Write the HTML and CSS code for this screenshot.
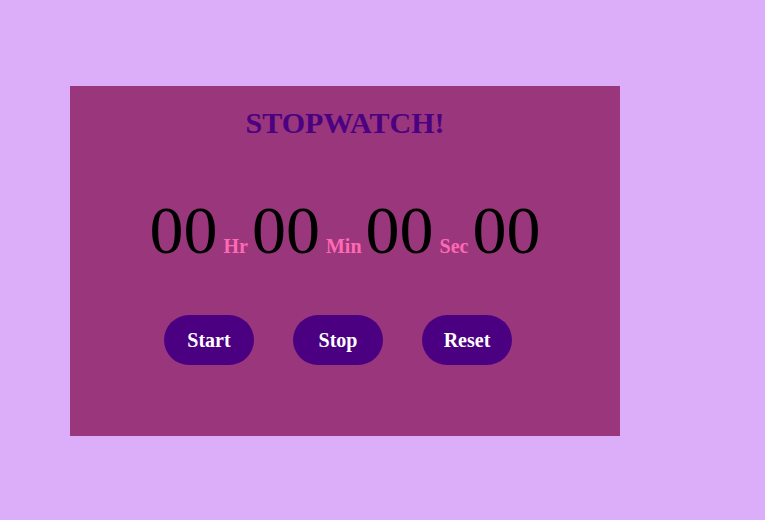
FILE: index.html
```html
<!DOCTYPE html>
<html>
<head>
<meta charset="utf-8">
<link rel="stylesheet" href="styles.css">
</head>
<body>
<div class="panel">
  <h1 class="title">STOPWATCH!</h1>
  <div class="time">
    <span class="num">00</span><span class="unit">Hr</span>
    <span class="num">00</span><span class="unit">Min</span>
    <span class="num">00</span><span class="unit">Sec</span>
    <span class="num">00</span>
  </div>
  <div class="buttons">
    <button class="btn">Start</button>
    <button class="btn">Stop</button>
    <button class="btn">Reset</button>
  </div>
</div>
</body>
</html>
```
FILE: styles.css
```css
html, body {
  margin: 0;
  padding: 0;
  background: #dcaef9;
  font-family: "Liberation Serif", "Times New Roman", serif;
}
.panel {
  margin: 86px 0 0 70px;
  width: 550px;
  height: 350px;
  background: #9a367b;
  display: flex;
  flex-direction: column;
  align-items: center;
  box-sizing: border-box;
}
.title {
  margin: 19px 0 0;
  font-size: 30px;
  font-weight: bold;
  color: #4b0082;
  line-height: 36px;
}
.time {
  margin-top: 49px;
  line-height: 80px;
  white-space: nowrap;
}
.num {
  font-size: 68px;
  color: #000;
}
.unit {
  font-size: 20px;
  font-weight: bold;
  color: #ff69b4;
  margin-left: 6px;
}
.buttons {
  margin-top: 27px;
  display: flex;
  gap: 39px;
  margin-right: 14px;
}
.btn {
  width: 90px;
  height: 50px;
  border: none;
  border-radius: 25px;
  background: #4b0082;
  color: #fff;
  font-family: "Liberation Serif", "Times New Roman", serif;
  font-size: 20px;
  font-weight: bold;
  padding: 0;
}
```
